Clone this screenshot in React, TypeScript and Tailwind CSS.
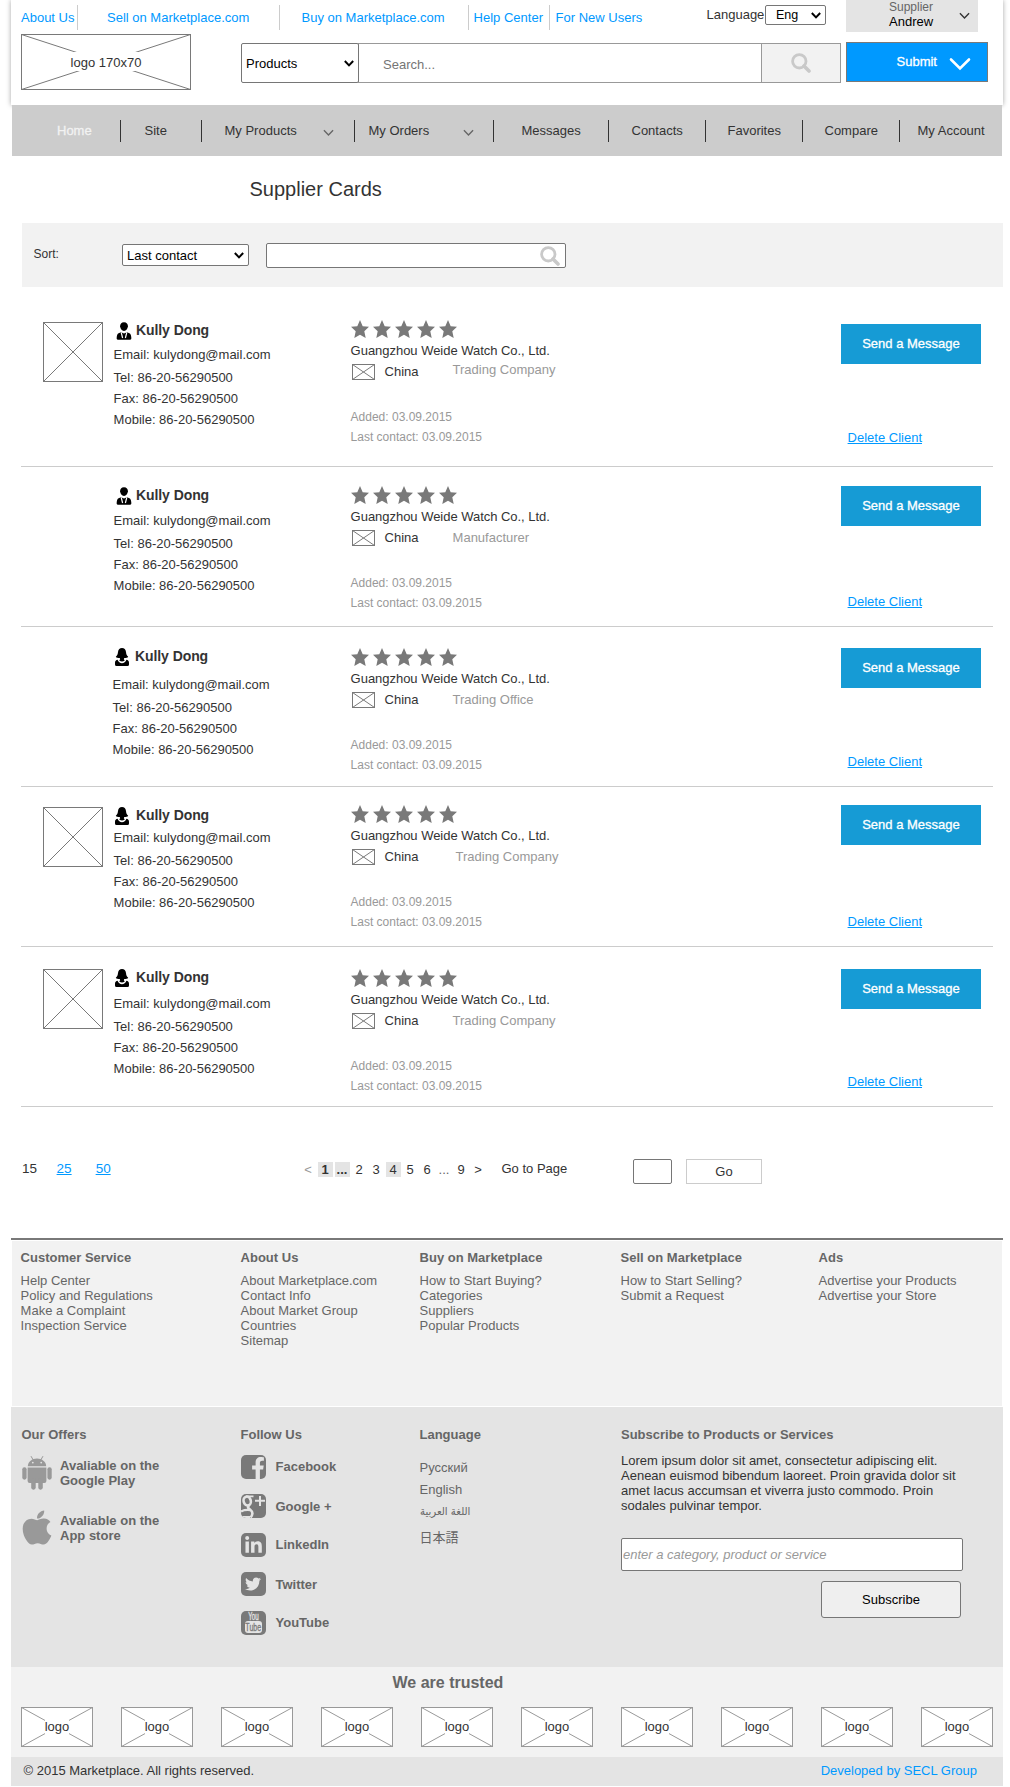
import React from "react";
import { FaApple, FaFacebookF, FaLinkedinIn, FaTwitter } from "react-icons/fa";

function Chevron({ className, width = 1 }: { className: string; width?: number }) {
  return (
    <svg viewBox="0 0 12 8" className={className} fill="none" stroke="currentColor" strokeWidth={width}>
      <path d="M1 1 L6 6.2 L11 1" />
    </svg>
  );
}

function SearchIcon({ className }: { className: string }) {
  return (
    <svg viewBox="0 0 20 20" className={className} fill="none" stroke="#c9c9c9">
      <circle cx="8.3" cy="8.3" r="6.7" strokeWidth="2.8" />
      <path d="M13 13 L18 18" strokeWidth="3.6" strokeLinecap="round" />
    </svg>
  );
}

function SelectBox({ label, box, arrow }: { label: string; box: string; arrow: string }) {
  return (
    <div className="relative">
      <select className={`block appearance-none rounded-[2px] border border-[#767676] bg-white text-black outline-none ${box}`}>
        <option>{label}</option>
      </select>
      <Chevron width={2.4} className={`pointer-events-none absolute h-[7px] w-[10px] text-black ${arrow}`} />
    </div>
  );
}

/* Crossed rectangle standing in for an image; a label sits on top when given. */
function Placeholder({ className, w, h, color = "#797979", children }: { className: string; w: number; h: number; color?: string; children?: React.ReactNode }) {
  return (
    <div className={`grid shrink-0 place-items-center bg-white *:col-start-1 *:row-start-1 ${className}`}>
      <svg width={w} height={h} fill="none" stroke={color}>
        <path d={`M0.5 0.5 L${w - 0.5} ${h - 0.5} M0.5 ${h - 0.5} L${w - 0.5} 0.5`} />
        <rect x="0.5" y="0.5" width={w - 1} height={h - 1} />
      </svg>
      {children}
    </div>
  );
}

function ManIcon() {
  return (
    <svg viewBox="0 0 16 18" className="ml-[3px] mr-1 h-[18px] w-4" fill="#000">
      <path d="M8 0.2c2.6 0 4 1.8 3.9 4.1C11.7 6.7 10.2 9 8 9S4.3 6.700 4.1 4.300C4 2 5.4 0.2 8 0.2z" />
      <path d="M5 10.300L8 11.500l3-1.200 2.400 1c1.200.6 1.700 1.900 1.900 4.200.1 1.200.1 2.200-1.300 2.200H2c-1.400 0-1.400-1-1.300-2.200.2-2.300.7-3.600 1.900-4.200z" />
      <path d="M5.200 10.400L6.600 16M10.800 10.400L9.400 16" stroke="#fff" strokeWidth="1.200" fill="none" />
    </svg>
  );
}

function WomanIcon({ gap }: { gap: string }) {
  return (
    <svg viewBox="0 0 14 18" className={`ml-[2px] h-[18px] w-[14px] ${gap}`} fill="#000">
      <path d="M7 0C9.300 0 10.700 1.500 11 4C11.200 6 11.700 7.500 13.200 8.700C12.600 9.700 11 10.100 9.300 10.100L8.800 11.300C9.500 12 9.800 12.300 9.500 12.700Q7 14.300 4.500 12.700C4.200 12.300 4.500 12 5.200 11.300L4.700 10.100C3 10.100 1.400 9.700 0.800 8.700C2.300 7.500 2.800 6 3 4C3.300 1.500 4.700 0 7 0z" />
      <path d="M2.600 11.800C3.400 14 5 15.300 7 15.300S10.600 14 11.400 11.800C13 12 14 13 14 14.800V16.500Q14 18 12.500 18H1.500Q0 18 0 16.500V14.800C0 13 1 12 2.600 11.800z" />
    </svg>
  );
}

function AndroidIcon() {
  return (
    <svg viewBox="0 0 30 34" className="mt-px h-[34px] w-[30px]" fill="#999">
      <path d="M5.800 10.200C6 5.500 10 2.400 15 2.400S24 5.500 24.200 10.200z" />
      <path d="M9.200 0.500L11.200 4M20.800 0.500L18.800 4" stroke="#999" strokeWidth="1" strokeLinecap="round" />
      <path d="M5.600 11.500H24.400V25Q24.400 27 22.400 27H7.600Q5.600 27 5.600 25z" />
      <rect x="0.300" y="11.200" width="4.300" height="12.500" rx="2.100" />
      <rect x="25.400" y="11.200" width="4.300" height="12.500" rx="2.100" />
      <rect x="9.200" y="22" width="4.500" height="11.700" rx="2.100" />
      <rect x="16.300" y="22" width="4.500" height="11.700" rx="2.100" />
      <circle cx="10.800" cy="6.600" r="0.900" fill="#e4e4e4" />
      <circle cx="19.200" cy="6.600" r="0.900" fill="#e4e4e4" />
    </svg>
  );
}

function Stars() {
  return (
    <div className="flex gap-1">
      {[0, 1, 2, 3, 4].map((i) => (
        <svg key={i} viewBox="0 0 18 18" className="h-[18px] w-[18px]" fill="#797979">
          <path d="M9 0L11.700 6.200L18 6.800L13.300 11.300L14.700 18L9 14.700L3.300 18L4.700 11.300L0 6.800L6.300 6.200z" />
        </svg>
      ))}
    </div>
  );
}

type Card = {
  height: string;
  avatar?: string;
  woman?: boolean;
  namePad: string;
  nameGap?: string;
  contact: string;
  companyPad: string;
  type: string;
  typeClass: string;
  buttonPad: string;
  deleteGap: string;
};

const cards: Card[] = [
  { height: "h-[180px]", avatar: "mt-[35px]", namePad: "pt-[35px]", contact: "mt-1 ml-[0.6px]", companyPad: "pt-[33px]", type: "Trading Company", typeClass: "ml-[34px] -mt-0.5", buttonPad: "pt-[37px]", deleteGap: "mt-[66px]" },
  { height: "h-[160px]", namePad: "pt-[20px]", contact: "mt-[5px] ml-[0.6px]", companyPad: "pt-[19px]", type: "Manufacturer", typeClass: "ml-[34px]", buttonPad: "pt-[19px]", deleteGap: "mt-[68px]" },
  { height: "h-[160px]", woman: true, namePad: "pt-[21px]", nameGap: "mr-[6px]", contact: "mt-2 -ml-[0.4px]", companyPad: "pt-[21px]", type: "Trading Office", typeClass: "ml-[34px]", buttonPad: "pt-[21px]", deleteGap: "mt-[66px]" },
  { height: "h-[160px]", avatar: "mt-[20px]", woman: true, namePad: "pt-[20px]", nameGap: "mr-[7px]", contact: "mt-0.5 ml-[0.6px]", companyPad: "pt-[18px]", type: "Trading Company", typeClass: "ml-[37px]", buttonPad: "pt-[18px]", deleteGap: "mt-[69px]" },
  { height: "h-[160px]", avatar: "mt-[22px]", woman: true, namePad: "pt-[22px]", nameGap: "mr-[7px]", contact: "mt-[6px] ml-[0.6px]", companyPad: "pt-[22px]", type: "Trading Company", typeClass: "ml-[34px]", buttonPad: "pt-[22px]", deleteGap: "mt-[65px]" },
];

function SupplierCard({ card }: { card: Card }) {
  return (
    <article className={`ml-[21px] flex w-[972px] border-b border-[#ccc] ${card.height}`}>
      <div className="w-[92px] shrink-0 pl-[22px]">
        {card.avatar && <Placeholder w={60} h={60} className={`h-[60px] w-[60px] ${card.avatar}`} />}
      </div>
      <div className={`w-[237.6px] shrink-0 ${card.namePad}`}>
        <div className="flex h-[18px]">
          {card.woman ? <WomanIcon gap={card.nameGap ?? ""} /> : <ManIcon />}
          <b className="text-[14px] leading-4 tracking-[-0.08px]">Kully Dong</b>
        </div>
        <div className={`leading-[21px] ${card.contact}`}>
          <p className="mb-0.5">Email: kulydong@mail.com</p>
          <p>Tel: 86-20-56290500</p>
          <p>Fax: 86-20-56290500</p>
          <p>Mobile: 86-20-56290500</p>
        </div>
      </div>
      <div className={`w-[490.4px] shrink-0 ${card.companyPad}`}>
        <Stars />
        <p className="mt-[5px] tracking-[-0.03px]">Guangzhou Weide Watch Co., Ltd.</p>
        <div className="mt-[6px] flex h-4 items-start">
          <Placeholder w={23} h={16} className="ml-[1.4px] h-4 w-[23px]" />
          <span className="ml-[9.600px] w-[34px]">China</span>
          <span className={`text-[#999] ${card.typeClass}`}>{card.type}</span>
        </div>
        <div className="mt-[27px] text-[12px] leading-5 text-[#999]">
          <p>Added: 03.09.2015</p>
          <p>Last contact: 03.09.2015</p>
        </div>
      </div>
      <div className={card.buttonPad}>
        <button className="block h-10 w-[140px] bg-[#169bd5] pb-[2px] text-white [-webkit-text-stroke:0.3px_#fff]">Send a Message</button>
        <a className={`ml-[6.600px] block w-fit text-[#0099ff] underline ${card.deleteGap}`}>Delete Client</a>
      </div>
    </article>
  );
}

const navItems = [
  { label: "Home", box: "w-[108px] pl-[45px] text-[#f2f2f2] [-webkit-text-stroke:0.3px_#f2f2f2]" },
  { label: "Site", box: "w-[81px] border-l pl-[23.500px]" },
  { label: "My Products", box: "w-[153px] border-l pl-[22.500px]", arrow: "ml-[26.500px]" },
  { label: "My Orders", box: "w-[139px] border-l pl-[13.500px]", arrow: "ml-[34px]" },
  { label: "Messages", box: "w-[115px] border-l pl-[27.500px]" },
  { label: "Contacts", box: "w-[97px] border-l pl-[22.500px]" },
  { label: "Favorites", box: "w-[97px] border-l pl-[21.500px]" },
  { label: "Compare", box: "w-[97px] border-l pl-[21.500px]" },
  { label: "My Account", box: "w-[103px] border-l pl-[17.500px]" },
];

const topLinks = [
  { label: "About Us", box: "w-[67px] border-r pl-[10px]" },
  { label: "Sell on Marketplace.com", box: "w-[202px] border-r pl-[29px]" },
  { label: "Buy on Marketplace.com", box: "w-[189px] border-r pl-[21.500px]" },
  { label: "Help Center", box: "w-[81px] border-r pl-[4.600px]" },
  { label: "For New Users", box: "pl-[5.600px]" },
];

const footerColumns = [
  { title: "Customer Service", width: "w-[220px]", links: ["Help Center", "Policy and Regulations", "Make a Complaint", "Inspection Service"] },
  { title: "About Us", width: "w-[179px]", links: ["About Marketplace.com", "Contact Info", "About Market Group", "Countries", "Sitemap"] },
  { title: "Buy on Marketplace", width: "w-[201px]", links: ["How to Start Buying?", "Categories", "Suppliers", "Popular Products"] },
  { title: "Sell on Marketplace", width: "w-[198px]", links: ["How to Start Selling?", "Submit a Request"] },
  { title: "Ads", width: "w-[170px]", links: ["Advertise your Products", "Advertise your Store"] },
];

const pages = [
  { label: "<", style: "text-[#999]" },
  { label: "1", style: "bg-[#e4e4e4] font-bold" },
  { label: "...", style: "bg-[#e4e4e4] font-bold" },
  { label: "2", style: "" },
  { label: "3", style: "" },
  { label: "4", style: "bg-[#e4e4e4]" },
  { label: "5", style: "" },
  { label: "6", style: "" },
  { label: "...", style: "text-[#666]" },
  { label: "9", style: "" },
  { label: ">", style: "" },
];

function GooglePlus() {
  return (
    <svg viewBox="0 0 24 24" className="h-6 w-6">
      <g fill="none" stroke="#e4e4e4">
        <ellipse cx="6.200" cy="7" rx="3.600" ry="4.500" strokeWidth="2.600" transform="rotate(-15 6.200 7)" />
        <path d="M5 2.300h7.500" strokeWidth="1.800" />
        <path d="M8 11.500c-2 2-.500 3 1.500 4.500 3 2.200 2 5.300 0 7.500" strokeWidth="2.600" />
        <path d="M0 17.500c3-1.800 5.500-1.800 9-1.500" strokeWidth="2.400" />
        <path d="M0 22.900h9" strokeWidth="2" />
        <path d="M14 6.800h10M19 2v10" strokeWidth="2" />
      </g>
    </svg>
  );
}

function YouTubeMark() {
  return (
    <div className="flex h-6 w-6 flex-col items-center">
      <span className="block h-[10px] scale-x-[0.62] text-[10px] leading-[11px] text-[#e4e4e4] [-webkit-text-stroke:0.3px_#e4e4e4]">You</span>
      <span className="flex h-[12px] w-[17px] justify-center rounded-[3px] bg-[#e4e4e4]">
        <span className="block scale-x-[0.7] text-[10px] leading-[13px] text-[#797979] [-webkit-text-stroke:0.3px_#797979]">Tube</span>
      </span>
    </div>
  );
}

const socials = [
  { label: "Facebook", icon: <FaFacebookF className="mt-[2px] ml-[9px] h-[22px] w-[17px]" />, pad: "mt-1" },
  { label: "Google +", icon: <GooglePlus />, pad: "mt-[5px]" },
  { label: "LinkedIn", icon: <FaLinkedinIn className="h-[19px] w-[19px]" />, pad: "mt-1" },
  { label: "Twitter", icon: <FaTwitter className="h-4 w-4" />, pad: "mt-[5px]" },
  { label: "YouTube", icon: <YouTubeMark />, pad: "mt-1" },
];

export default function App() {
  return (
    <div className="h-[1787px] w-[1010px] overflow-hidden bg-white font-['Liberation_Sans',Arial,sans-serif] text-[13px] leading-[15px] text-[#333]">
      <header className="ml-[11px] h-[105px] w-[992px] shadow-[0_0_5px_rgba(0,0,0,0.35)]">
        <div className="flex h-[34px] items-start">
          <nav className="mt-[5px] flex text-[#0099ff]">
            {topLinks.map((l) => (
              <a key={l.label} className={`h-[25px] shrink-0 whitespace-nowrap border-[#ccc] pt-[5px] ${l.box}`}>{l.label}</a>
            ))}
          </nav>
          <span className="ml-auto mt-[7px] w-[58.500px]">Language</span>
          <div className="mt-[5px]">
            <SelectBox label="Eng" box="h-5 w-[61px] pl-[10px] text-[12.500px]" arrow="right-[5px] top-[7px]" />
          </div>
          <div className="ml-[20px] mr-[25px] flex h-8 w-[132px] shrink-0 bg-[#e4e4e4] pl-[43px]">
            <div className="w-[70px]">
              <p className="text-[12px] leading-[14px] text-[#666]">Supplier</p>
              <p className="text-black">Andrew</p>
            </div>
            <Chevron width={1.500} className="mt-[12px] h-[8px] w-[11px] text-[#333]" />
          </div>
        </div>
        <div className="flex pl-[10px]">
          <Placeholder w={170} h={56} className="h-14 w-[170px]">
            <span className="mb-[1px] bg-white px-1 pb-px pt-[3px]">logo 170x70</span>
          </Placeholder>
          <div className="ml-[50px] mt-[9px] flex">
            <SelectBox label="Products" box="h-10 w-[118px] pl-1 text-[13px]" arrow="right-[5px] top-[17px]" />
            <input placeholder="Search..." className="-ml-px h-10 w-[404px] border border-[#999] bg-white pl-[24px] pt-0.5 outline-none placeholder:text-[#757575]" />
            <button className="-ml-px flex h-10 w-20 items-center justify-center border border-[#999] bg-[#f2f2f2]">
              <SearchIcon className="h-5 w-5" />
            </button>
            <button className="-mt-px ml-[5px] flex h-10 w-[142px] border border-[#797979] bg-[#0099ff] pl-[49.500px] pt-[11px] text-left text-white [-webkit-text-stroke:0.3px_#fff]">
              Submit
              <svg viewBox="0 0 22 14" className="ml-[12.500px] mt-[3px] h-[14px] w-[22px]" fill="none" stroke="#fff" strokeWidth="2.600" strokeLinecap="round">
                <path d="M2 2.500L11 11.500L20 2.500" />
              </svg>
            </button>
          </div>
        </div>
      </header>

      <nav className="relative ml-3 flex h-[51px] w-[990px] bg-[#ccc] pt-[15px]">
        {navItems.map((n) => (
          <a key={n.label} className={`flex h-[22px] shrink-0 items-start whitespace-nowrap border-[#333] pt-[3px] ${n.box}`}>
            {n.label}
            {n.arrow && <Chevron width={1.500} className={`mt-[6px] h-[8px] w-[11px] text-[#666] ${n.arrow}`} />}
          </a>
        ))}
      </nav>

      <h1 className="mb-[23px] ml-[249.500px] mt-[22px] text-[20px] leading-[22px]">Supplier Cards</h1>

      <div className="ml-[22px] flex h-16 w-[981px] items-start bg-[#f2f2f2]">
        <span className="ml-[11.500px] mt-[24px] w-[88.500px] text-[12px]">Sort:</span>
        <div className="mt-[21px]">
          <SelectBox label="Last contact" box="h-[22px] w-[127px] pl-1 text-[13px]" arrow="right-[5px] top-[8px]" />
        </div>
        <div className="ml-[17px] mt-[20px] flex h-[25px] w-[300px] items-start justify-end rounded-[2px] border border-[#767676] bg-white pr-[5px] pt-[2px]">
          <SearchIcon className="h-5 w-5" />
        </div>
      </div>

      <main>
        {cards.map((card, i) => (
          <SupplierCard key={i} card={card} />
        ))}
      </main>

      <div className="flex h-[131px] items-start pt-[52px]">
        <div className="ml-[22px] mt-[2px] flex w-[278.500px] text-[13.500px] leading-4">
          <span className="w-[34.600px]">15</span>
          <a className="mr-[24px] text-[#0099ff] underline">25</a>
          <a className="text-[#0099ff] underline">50</a>
        </div>
        <div className="mt-[3px] flex gap-0.5">
          {pages.map((p, i) => (
            <span key={i} className={`w-[15px] text-center ${p.style}`}>{p.label}</span>
          ))}
        </div>
        <span className="ml-[16px] mt-[2px] w-[131.500px]">Go to Page</span>
        <input className="h-[25px] w-[39px] rounded-[2px] border border-[#767676] bg-white" />
        <button className="ml-[14px] h-[25px] w-[76px] border border-[#ccc] bg-white">Go</button>
      </div>

      <footer className="text-[#666]">
        <div className="ml-[11px] h-0.5 w-[992px] bg-[#797979]" />
        <div className="ml-3 mt-px flex h-[165px] w-[990px] bg-[#f2f2f2] pl-[8.600px] pt-[9px]">
          {footerColumns.map((c) => (
            <section key={c.title} className={`shrink-0 ${c.width}`}>
              <h2 className="mb-2 font-bold">{c.title}</h2>
              {c.links.map((l) => (
                <a key={l} className="block">{l}</a>
              ))}
            </section>
          ))}
        </div>

        <div className="ml-[11px] mt-px flex h-[260px] w-[992px] bg-[#e4e4e4] pl-[10.500px] pt-[20px]">
          <section className="w-[219px]">
            <h2 className="font-bold">Our Offers</h2>
            <div className="mt-[13px] flex h-[55px]">
              <AndroidIcon />
              <p className="ml-[8.500px] mt-[3px] font-bold">Avaliable on the<br />Google Play</p>
            </div>
            <div className="flex">
              <FaApple className="-ml-[3px] -mt-[2px] h-[39px] w-[36px] text-[#999]" />
              <p className="ml-[5.500px] mt-[3px] font-bold">Avaliable on the<br />App store</p>
            </div>
          </section>
          <section className="w-[179px]">
            <h2 className="mb-[13px] font-bold">Follow Us</h2>
            <div className="flex flex-col gap-[15px]">
              {socials.map((s) => (
                <div key={s.label} className="flex h-6 items-start">
                  <span className="flex h-6 w-[25px] items-center justify-center overflow-hidden rounded-[5px] bg-[#797979] text-[#e4e4e4]">{s.icon}</span>
                  <b className={`ml-[10px] ${s.pad}`}>{s.label}</b>
                </div>
              ))}
            </div>
          </section>
          <section className="w-[201.500px]">
            <h2 className="mb-[18px] font-bold">Language</h2>
            <p className="mb-[7px]">Русский</p>
            <p className="mb-[7px]">English</p>
            <p className="mb-[10px] w-fit origin-left scale-x-[0.92] whitespace-nowrap font-['DejaVu_Sans',sans-serif] text-[11px]" dir="rtl">اللغة العربية</p>
            <p className="font-['Noto_Sans_CJK_JP',sans-serif]">日本語</p>
          </section>
          <section className="w-[345px]">
            <h2 className="mb-[11px] font-bold">Subscribe to Products or Services</h2>
            <p className="text-[#333]">
              Lorem ipsum dolor sit amet, consectetur adipiscing elit.<br />
              Aenean euismod bibendum laoreet. Proin gravida dolor sit<br />
              amet lacus accumsan et viverra justo commodo. Proin<br />
              sodales pulvinar tempor.
            </p>
            <input placeholder="enter a category, product or service" className="mt-[25px] block h-[33px] w-[342px] rounded-[2px] border border-[#767676] bg-white pl-px italic placeholder:text-[#999]" />
            <button className="ml-[200px] mt-[10px] block h-[37px] w-[140px] rounded-[3px] border border-[#767676] bg-[#efefef] text-black">Subscribe</button>
          </section>
        </div>

        <div className="ml-[11px] h-[90px] w-[992px] bg-[#f2f2f2] pl-[10px] pt-[7px]">
          <h2 className="ml-[371.500px] text-[16px] font-bold leading-[17px]">We are trusted</h2>
          <div className="mt-4 flex gap-7">
            {Array.from({ length: 10 }, (_, i) => (
              <Placeholder key={i} w={72} h={40} color="#999" className="h-10 w-[72px]">
                <span className="mb-px bg-white text-[#333]">logo</span>
              </Placeholder>
            ))}
          </div>
        </div>

        <div className="ml-[11px] flex h-[29px] w-[992px] justify-between bg-[#e4e4e4] pl-[12.500px] pr-[26px] pt-[6px] text-[#333]">
          <span>© 2015 Marketplace. All rights reserved.</span>
          <a className="text-[#0099ff]">Developed by SECL Group</a>
        </div>
      </footer>
    </div>
  );
}
